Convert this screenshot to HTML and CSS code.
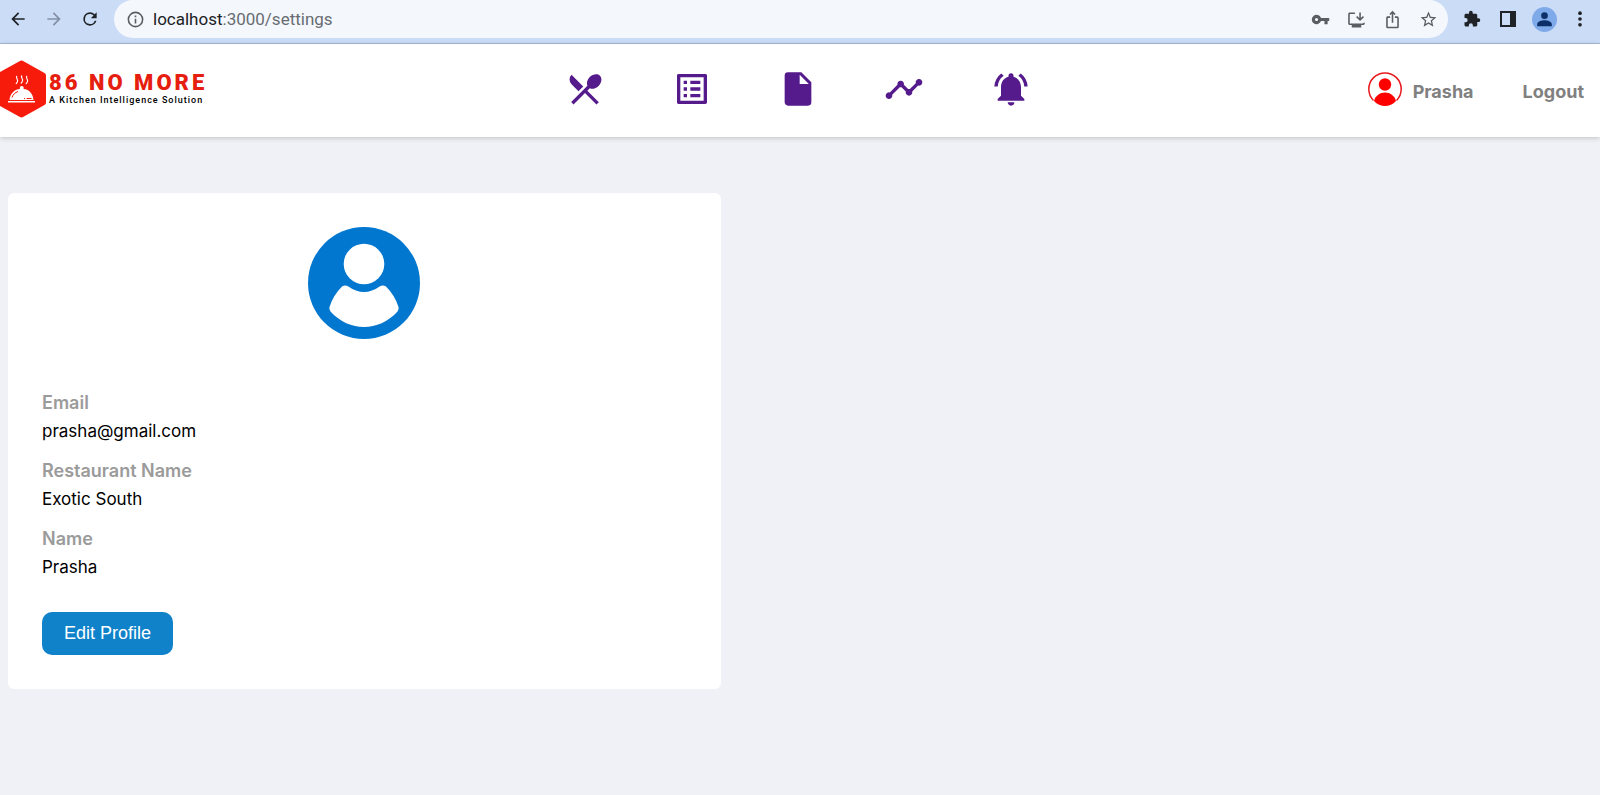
FILE: index.html
```html
<!DOCTYPE html>
<html lang="en">
<head>
<meta charset="utf-8">
<title>86 No More - Settings</title>
<link rel="stylesheet" href="styles.css">
</head>
<body>
<div class="toolbar">
  <div class="tool-group">
    <button class="tool" type="button" aria-label="Back"><svg viewBox="0 0 24 24"><path d="M20 11H7.830l5.590-5.590L12 4l-8 8 8 8 1.410-1.410L7.830 13H20z"/></svg></button>
    <button class="tool tool-off" type="button" aria-label="Forward"><svg viewBox="0 0 24 24"><path d="M12 4l-1.410 1.410L16.170 11H4v2h12.170l-5.580 5.590L12 20l8-8z"/></svg></button>
    <button class="tool" type="button" aria-label="Reload"><svg viewBox="0 0 24 24"><path d="M17.650 6.350A7.950 7.950 0 0 0 12 4a8 8 0 1 0 7.730 10h-2.080A6 6 0 1 1 12 6c1.660 0 3.140.69 4.220 1.780L13 11h7V4z"/></svg></button>
  </div>
  <div class="address">
    <svg class="info" viewBox="0 0 24 24"><path d="M11 7h2v2h-2zm0 4h2v6h-2zm1-9a10 10 0 1 0 0 20 10 10 0 0 0 0-20zm0 18a8 8 0 1 1 0-16 8 8 0 0 1 0 16z"/></svg>
    <span class="url"><span class="host">localhost</span>:3000/settings</span>
    <div class="tool-group page-tools">
      <button class="tool" type="button" aria-label="Passwords"><svg class="small" viewBox="0 0 24 24"><path d="M12.650 10A6 6 0 1 0 12.650 14H17v4h4v-4h2v-4zM7 14a2 2 0 1 1 0-4 2 2 0 0 1 0 4z"/></svg></button>
      <button class="tool" type="button" aria-label="Install"><svg viewBox="0 0 24 24"><path d="M20.500 16v1H3.500V5H10V3H3.500c-1.100 0-2 .9-2 2v12c0 1.100.9 2 2 2H6v3h12v-3h2.500c1.100 0 2-.9 2-2v-1zM16.500 14l5-5-1.410-1.410-2.590 2.580V3h-2v7.170l-2.590-2.580L11.500 9z"/></svg></button>
      <button class="tool" type="button" aria-label="Share"><svg viewBox="0 0 24 24"><path d="M16 5l-1.420 1.420-1.590-1.590V16h-1.980V4.830L9.420 6.420 8 5l4-4zM20 10v11a2 2 0 0 1-2 2H6a2 2 0 0 1-2-2V10c0-1.110.89-2 2-2h3v2H6v11h12V10h-3V8h3a2 2 0 0 1 2 2z"/></svg></button>
      <button class="tool" type="button" aria-label="Bookmark"><svg viewBox="0 0 24 24"><path d="M22 9.240l-7.190-.62L12 2 9.190 8.630 2 9.240l5.460 4.730L5.820 21 12 17.270 18.180 21l-1.630-7.030zM12 15.400l-3.760 2.270 1-4.280-3.320-2.880 4.380-.38L12 6.100l1.710 4.040 4.380.38-3.320 2.880 1 4.280z"/></svg></button>
    </div>
  </div>
  <div class="tool-group">
    <button class="tool" type="button" aria-label="Extensions"><svg class="medium" viewBox="0 0 24 24"><path d="M20.500 11H19V7c0-1.100-.9-2-2-2h-4V3.500a2.500 2.500 0 0 0-5 0V5H4c-1.100 0-2 .9-2 2v3.800h1.500a2.700 2.700 0 0 1 0 5.400H2V20c0 1.100.9 2 2 2h3.800v-1.500a2.700 2.700 0 0 1 5.400 0V22H17c1.100 0 2-.9 2-2v-4h1.500a2.500 2.500 0 0 0 0-5z"/></svg></button>
    <button class="tool" type="button" aria-label="Side panel"><svg class="small" viewBox="0 0 16 16"><path fill-rule="evenodd" d="M0 0h16v16H0zM2 2v12h8V2z"/></svg></button>
    <button class="tool" type="button" aria-label="Profile"><svg class="profile" viewBox="0 0 24 24"><circle cx="12" cy="12" r="12" fill="#7faaea"/><path fill="#0b2f66" d="M12 11.500a3.200 3.200 0 1 0 0-6.400 3.200 3.200 0 0 0 0 6.400zM12 12.700c-2.700 0-7 1.200-7 3.700v2h14v-2c0-2.500-4.300-3.700-7-3.700z"/></svg></button>
    <button class="tool" type="button" aria-label="Menu"><svg viewBox="0 0 24 24"><circle cx="12" cy="5" r="2.200"/><circle cx="12" cy="12" r="2.200"/><circle cx="12" cy="19" r="2.200"/></svg></button>
  </div>
</div>

<header class="header">
  <a class="brand" href="#">
    <svg class="hexagon" viewBox="0 0 46 58">
      <path fill="#f71b0c" d="M19.500 1.200q2-1.200 4 0L44.500 13q1.500.8 1.500 2.500v27q0 1.700-1.500 2.500L23.500 56.800q-2 1.200-4 0L0 46V12z"/>
      <path fill="none" stroke="#fff" stroke-width="1.200" d="M17 16c-2 2 1.500 3 .5 5.500-.2 1-1 1.500-1.500 2.500M22 15.500c-2 2 1.500 3 .5 5.500-.2 1-1 1.500-1.500 2.500M27 16c-2 2 1.500 3 .5 5.500-.2 1-1 1.500-1.500 2.500"/>
      <path fill="#fff" d="M20 29a2 2 0 1 1 3.500 0c6 .5 9.500 5 10 11h-24c.5-6 4.500-10.500 10.500-11zM8 41h27v1.500H8z"/>
      <path fill="none" stroke="#f71b0c" stroke-width="1" d="M12 37.500c1-3 3-5 6-6M24 38.500h1M26.500 38.500h5"/>
    </svg>
    <span class="brand-text">
      <span class="brand-name">86 NO MORE</span>
      <span class="brand-tag">A Kitchen Intelligence Solution</span>
    </span>
  </a>
  <nav class="nav">
    <a href="#" aria-label="Menu"><svg viewBox="0 0 24 24"><path d="M8.100 13.340l2.830-2.830L3.910 3.500a4 4 0 0 0 0 5.660zM14.880 11.530c1.530.71 3.680.21 5.270-1.380 1.910-1.910 2.280-4.650.81-6.120-1.460-1.460-4.200-1.100-6.120.81-1.590 1.590-2.090 3.740-1.380 5.270L3.700 19.870l1.410 1.410L12 14.410l6.880 6.880 1.410-1.410L13.410 13z"/></svg></a>
    <a href="#" aria-label="Inventory"><svg viewBox="0 0 24 24"><path fill-rule="evenodd" d="M20.100 3H3.900c-.5 0-.9.400-.9.900v16.200c0 .4.400.9.900.9h16.200c.4 0 .9-.5.900-.9V3.900c0-.5-.5-.9-.9-.9zM19 19H5V5h14zM11 7h6v2h-6zm0 4h6v2h-6zm0 4h6v2h-6zM7 7h2v2H7zm0 4h2v2H7zm0 4h2v2H7z"/></svg></a>
    <a href="#" aria-label="Documents"><svg viewBox="0 0 24 24"><path d="M6 2a2 2 0 0 0-2 2v16c0 1.100.89 2 2 2h12a2 2 0 0 0 2-2V8l-6-6zm7 7V3.500L18.500 9z"/></svg></a>
    <a href="#" aria-label="Analytics"><svg viewBox="0 0 24 24"><path d="M23 8a2 2 0 0 1-2.510 1.930l-3.560 3.550A2 2 0 1 1 13.070 13.480l-2.550-2.550c-.3.090-.74.090-1.040 0l-4.550 4.560A2 2 0 1 1 3.510 14.070l4.560-4.550A2 2 0 1 1 11.930 9.520l2.550 2.550c.3-.09.74-.09 1.040 0l3.550-3.560A2 2 0 1 1 23 8z"/></svg></a>
    <a href="#" aria-label="Notifications"><svg viewBox="0 0 24 24"><path d="M7.580 4.080L6.150 2.650A10.430 10.430 0 0 0 2.030 10.500h2a8.450 8.450 0 0 1 3.550-6.420zM19.970 10.500h2a10.490 10.490 0 0 0-4.120-7.850l-1.420 1.430a8.500 8.500 0 0 1 3.540 6.420zM18 11c0-3.070-1.640-5.640-4.500-6.320V4a1.500 1.500 0 0 0-3 0v.68C7.630 5.360 6 7.920 6 11v5l-2 2v1h16v-1l-2-2zM12 22a2 2 0 0 0 2-2h-4c0 1.100.9 2 2 2z"/></svg></a>
  </nav>
  <div class="account">
    <a class="user" href="#">
      <svg viewBox="0 0 34 34"><path fill="none" stroke="#e8191c" stroke-width="1.500" d="M5.500 28.500a16.200 16.200 0 1 1 23 0"/><circle cx="17" cy="12.500" r="6.200" fill="#f00"/><path fill="#f00" d="M6 29c1.500-5.500 6-8.500 11-8.500s9.500 3 11 8.500c-3 3.200-7 5-11 5s-8-1.800-11-5z"/></svg>
      <span>Prasha</span>
    </a>
    <a class="logout" href="#">Logout</a>
  </div>
</header>

<main class="content">
  <section class="card">
    <svg class="avatar" viewBox="0 0 112 112"><circle cx="56" cy="56" r="56" fill="#0277cf"/><circle cx="56" cy="37" r="20.300" fill="#fff"/><path fill="#fff" d="M34 59.500q3-2 6-.3 16 11.600 32 0 3-1.700 6 .3 9 9 12.500 20.500.8 2.500-1 4.500C80 95 68 100 56 100s-24-5-33.500-15.500q-1.800-2-1-4.500Q25 68.500 34 59.500z"/></svg>
    <dl class="details">
      <dt>Email</dt><dd>prasha@gmail.com</dd>
      <dt>Restaurant Name</dt><dd>Exotic South</dd>
      <dt>Name</dt><dd>Prasha</dd>
    </dl>
    <button class="edit" type="button">Edit Profile</button>
  </section>
</main>
</body>
</html>
```
FILE: styles.css
```css
* { box-sizing: border-box; }
body {
  margin: 0;
  min-height: 100vh;
  background: #f0f1f6;
  color: #000;
  font-family: Inter, "Liberation Sans", sans-serif;
  font-size: 18px;
}
a { color: inherit; text-decoration: none; }
button { border: 0; font: inherit; cursor: pointer; }
svg { display: block; fill: currentColor; }

.toolbar {
  display: flex;
  gap: 6px;
  padding: 0 2px 5px 0;
  background: #cbdcf6;
  border-bottom: 1px solid #a9b9d6;
}
.tool-group { display: flex; align-items: center; }
.tool {
  display: flex;
  justify-content: center;
  align-items: center;
  width: 36px;
  height: 38px;
  padding: 0;
  background: none;
  color: #1f2226;
}
.tool svg { width: 20px; height: 20px; }
.tool svg.small { width: 16px; height: 16px; }
.tool svg.medium { width: 18px; height: 18px; }
.tool svg.profile { width: 25px; height: 25px; }
.tool-off { color: #8590a5; }
.address {
  flex: 1;
  display: flex;
  align-items: center;
  padding: 0 2px 0 12px;
  background: #f4f8fd;
  border-radius: 19px;
}
.info { width: 19px; height: 19px; color: #5a5e63; }
.url {
  flex: 1;
  padding-left: 8px;
  color: #686c71;
  font-family: Roboto, sans-serif;
  font-size: 17px;
}
.host { color: #202124; }
.page-tools .tool { color: #5a5e63; }
.page-tools .tool svg { width: 19px; height: 19px; }

.header {
  display: grid;
  grid-template-columns: 1fr 1fr 1fr;
  align-items: center;
  height: 93px;
  padding-right: 4px;
  background: #fff;
  box-shadow: 0 1px 5px rgba(0, 0, 0, 0.2);
}
.brand { display: flex; align-items: center; gap: 3px; padding-bottom: 4px; }
.hexagon { width: 46px; height: 58px; }
.brand-text { display: flex; flex-direction: column; padding-bottom: 2px; font-family: Roboto, sans-serif; }
.brand-name {
  color: #e61e10;
  font-size: 22px;
  font-weight: 900;
  line-height: 24px;
  letter-spacing: 3px;
}
.brand-tag {
  color: #000;
  font-size: 9px;
  font-weight: 500;
  line-height: 10px;
  letter-spacing: 1px;
}
.nav { display: grid; grid-template-columns: repeat(5, 1fr); justify-items: center; padding-bottom: 4px; color: #551a8b; }
.nav svg { width: 40px; height: 40px; }
.account {
  display: flex;
  justify-content: flex-end;
  align-items: center;
  gap: 49px;
  padding: 2px 12px 0 0;
  color: #808080;
  font-weight: 700;
}
.user { display: flex; align-items: center; gap: 11px; }
.user svg { width: 34px; height: 34px; margin-bottom: 6px; }

.content { padding: 56px 8px; }
.card {
  width: 45%;
  padding: 34px;
  background: #fff;
  border-radius: 6px;
}
.avatar { width: 112px; height: 112px; margin: 0 auto; }
.details { margin: 50px 0 0; }
.details dt { color: #9b9b9b; font-weight: 600; line-height: 28px; }
.details dd { margin: 0 0 12px; font-size: 17px; line-height: 28px; }
.edit {
  display: block;
  margin-top: 31px;
  padding: 11px 22px;
  background: #1082ca;
  border-radius: 10px;
  color: #fff;
  font-family: "Liberation Sans", sans-serif;
  font-size: 18px;
  line-height: 21px;
}
```
